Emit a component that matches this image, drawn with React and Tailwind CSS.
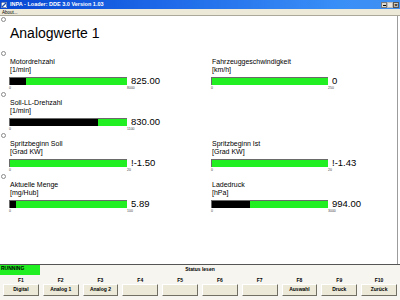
const left = [
  { label: 'Motordrehzahl', unit: '[1/min]', value: '825.00', max: '8000', fill: 0.135 },
  { label: 'Soll-LL-Drehzahl', unit: '[1/min]', value: '830.00', max: '1100', fill: 0.75 },
  { label: 'Spritzbeginn Soll', unit: '[Grad KW]', value: '!-1.50', max: '20', fill: 0 },
  { label: 'Aktuelle Menge', unit: '[mg/Hub]', value: '5.89', max: '100', fill: 0.055 },
];

const right = [
  { label: 'Fahrzeuggeschwindigkeit', unit: '[km/h]', value: '0', max: '250', fill: 0 },
  null,
  { label: 'Spritzbeginn Ist', unit: '[Grad KW]', value: '!-1.43', max: '20', fill: 0 },
  { label: 'Ladedruck', unit: '[hPa]', value: '994.00', max: '3000', fill: 0.33 },
];

const keys = [
  ['F1', 'Digital'], ['F2', 'Analog 1'], ['F3', 'Analog 2'], ['F4', ''], ['F5', ''],
  ['F6', ''], ['F7', ''], ['F8', 'Auswahl'], ['F9', 'Druck'], ['F10', 'Zurück'],
];

function Marker({ show }) {
  return show
    ? <div className="ml-[1px] h-[5px] w-[5px] rounded-full border border-[#8a8a8a] bg-white" />
    : <div className="h-[5px]" />;
}

function Gauge({ item, marker, barW }) {
  return (
    <div className="h-[41px]">
      <Marker show={marker} />
      {item && (
        <div className={marker ? 'pl-[9px]' : ''}>
          <div className="mt-[2px] pl-[1px] text-[7px] leading-[8px] text-black">{item.label}</div>
          <div className="pl-[1px] text-[7px] leading-[8px] text-black">{item.unit}</div>
          <div className="mt-[3px] flex items-center">
            <div className={`relative h-[8px] ${barW} border-t border-l border-[#6a6a6a] bg-[#22ef22]`}>
              <div className="absolute left-0 top-0 h-full bg-black" style={{ width: `${item.fill * 100}%` }} />
            </div>
            <div className="ml-[4px] text-[9.5px] leading-[8px] text-black">{item.value}</div>
          </div>
          <div className="mt-[1px] flex text-[3.5px] leading-[5px] text-[#444]">
            <span className={barW}>0</span>
            <span>{item.max}</span>
          </div>
        </div>
      )}
    </div>
  );
}

export default function App() {
  return (
    <div className="flex h-[300px] w-[400px] flex-col overflow-hidden bg-white font-['Liberation_Sans',Arial,sans-serif]">
      {/* title bar */}
      <div className="flex h-[9px] items-center bg-[linear-gradient(to_right,#0747d2,#1d68e8_40%,#3a8ff7_85%,#3f8ff2)] pl-[1px] pr-[1px]">
        <svg width="6" height="6" viewBox="0 0 6 6">
          <rect x="0" y="0" width="6" height="6" fill="#fff" />
          <path d="M1 5 L5 1" stroke="#1a4cb0" strokeWidth="1.2" />
          <rect x="0.5" y="0.5" width="5" height="5" fill="none" stroke="#1a3f8f" strokeWidth="0.6" />
        </svg>
        <span className="ml-[3px] text-[5.5px] font-bold leading-none text-white">INPA - Loader: DDE 3.0 Version 1.03</span>
        <div className="ml-auto flex gap-[0px]">
          <div className="flex h-[6px] w-[6px] items-end justify-center border border-[#7a7a7a] bg-[#dcdad0] pb-[1px]">
            <div className="h-[1px] w-[3px] bg-black" />
          </div>
          <div className="h-[6px] w-[6px] border border-[#b9b9b9] bg-[#e6e4dc]" />
          <div className="flex h-[6px] w-[6px] items-center justify-center border border-[#555] bg-[#cfccc2] text-[6px] font-bold leading-none text-black">×</div>
        </div>
      </div>

      {/* menu bar */}
      <div className="h-[7px] border-b border-[#aca899] bg-[#ece9d8] pl-[2px] text-[4.5px] leading-[7px] text-black">About...</div>

      {/* content */}
      <div className="mr-[2px] flex-1 border-r border-[#9c9c9c] bg-white">
        <div className="mt-[1px]"><Marker show /></div>
        <div className="mt-[4px] h-[14px] pl-[10px] text-[14px] leading-[14px] text-black">Analogwerte 1</div>
        <div className="mt-[11px] grid grid-cols-[211px_1fr]">
          <div>
            {left.map((item) => (
              <Gauge key={item.label} item={item} marker barW="w-[118px]" />
            ))}
          </div>
          <div>
            {right.map((item, i) => (
              <Gauge key={i} item={item} barW="w-[117px]" />
            ))}
          </div>
        </div>
      </div>

      {/* status + function keys */}
      <div className="h-[36px] border-t border-[#555] bg-[#f6f5f0]">
        <div className="grid h-[11px] grid-cols-[1fr_auto_1fr] items-start">
          <div className="h-[10px] w-[40px] bg-[#22ef22] pl-[1px] text-[5px] font-bold leading-[7px] text-black">RUNNING</div>
          <div className="text-[5px] font-bold leading-[8px] text-black">Status lesen</div>
          <div />
        </div>
        <div className="grid grid-cols-10 gap-[4px] px-[3px]">
          {keys.map(([f]) => (
            <div key={f} className="text-center text-[5px] font-bold leading-[8px] text-black">{f}</div>
          ))}
        </div>
        <div className="grid grid-cols-10 gap-[4px] px-[3px]">
          {keys.map(([f, label]) => (
            <div
              key={f}
              className="flex h-[12px] items-center justify-center border border-t-white border-l-white border-b-[#716f64] border-r-[#716f64] bg-[#ece9d8] text-[5px] font-bold text-black"
            >
              {label}
            </div>
          ))}
        </div>
      </div>
    </div>
  );
}
